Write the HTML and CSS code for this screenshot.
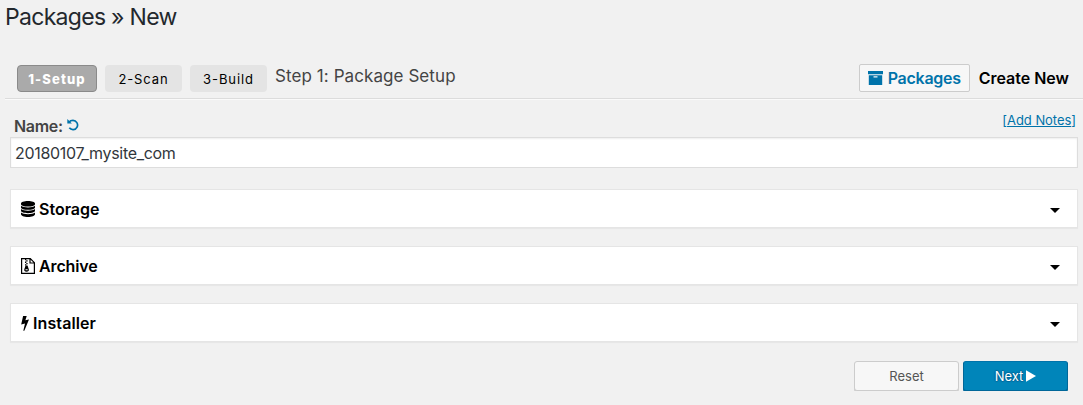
FILE: index.html
```html
<!DOCTYPE html>
<html lang="en">
<head>
  <meta charset="utf-8">
  <title>Packages » New</title>
  <link rel="stylesheet" href="styles.css">
</head>
<body>
  <h1><span>Packages » New</span></h1>

  <div class="toolbar">
    <div class="wizard">
      <div class="step active"><span>1-Setup</span></div>
      <div class="step"><span>2-Scan</span></div>
      <div class="step"><span>3-Build</span></div>
      <div class="wizard-title">Step 1: Package Setup</div>
    </div>
    <div class="toolbar-right">
      <a class="btn-packages">
        <svg width="15" height="14" viewBox="0 0 15 14"><path fill="currentColor" d="M0 0h15v3.2H0zM.8 4.2h13.4V14H.8zM5.5 5.2v1.3h4V5.2z" fill-rule="evenodd"/></svg>
        <span>Packages</span>
      </a>
      <span class="create-new">Create New</span>
    </div>
  </div>

  <form class="package-form">
    <div class="name-row">
      <label for="package-name">Name:</label>
      <svg class="undo" width="12" height="12" viewBox="0 0 12 12"><path d="M1.9 3.2C2.9 2 4.3 1.4 6 1.4a4.6 4.6 0 1 1-3.7 7.4" fill="none" stroke="currentColor" stroke-width="1.7"/><path d="M.3 0v4.6h4.6z" fill="currentColor"/></svg>
      <a class="add-notes">[<u>Add Notes</u>]</a>
    </div>
    <input type="text" id="package-name" value="20180107_mysite_com">

    <div class="box">
      <svg width="14" height="16" viewBox="0 0 14 16"><path d="M0 2.4C0 1 3 0 7 0s7 1 7 2.4v.8C14 4.600 11 5.500 7 5.500S0 4.600 0 3.200zM0 4.700c1.400 1.200 4 1.700 7 1.700s5.600-.5 7-1.700v1.700c0 1.300-3 2.400-7 2.400S0 7.700 0 6.400zM0 8.100c1.400 1.200 4 1.700 7 1.700s5.600-.5 7-1.700v1.700c0 1.300-3 2.400-7 2.400S0 11.100 0 9.800zM0 11.500c1.400 1.200 4 1.700 7 1.700s5.600-.5 7-1.700v1.800C14 14.800 11 16 7 16s-7-1.200-7-2.700z"/></svg>
      <span class="box-title storage">Storage</span>
      <i class="caret"></i>
    </div>
    <div class="box">
      <svg width="14" height="16" viewBox="0 0 14 16"><path d="M.6.6h8.700l4.100 4.100v10.700H.6zM9 .6V5h4.400" fill="none" stroke="#000" stroke-width="1.200"/><path d="M4 1h1.300v1.300H4zM5.300 2.300h1.300v1.300H5.300zM4 3.600h1.300v1.300H4zM5.300 4.900h1.300v1.300H5.300zM4 6.200h1.300v1.300H4z"/><path d="M4.600 7.500h1.900l1.300 3.700c.5 1.500-.6 2.500-2.300 2.500s-2.600-1-2.200-2.500zM4.500 11.300v1h2.200v-1z" fill-rule="evenodd"/></svg>
      <span class="box-title archive">Archive</span>
      <i class="caret"></i>
    </div>
    <div class="box">
      <svg width="8" height="15" viewBox="0 0 8 15"><path d="M2.100 0h3.600L4.400 4.300 8 3.500 3.300 14.800h-1L4 7.500.2 8.400z"/></svg>
      <span class="box-title installer">Installer</span>
      <i class="caret"></i>
    </div>

    <div class="actions">
      <button type="reset" class="button"><span>Reset</span></button>
      <button type="button" class="button primary"><span>Next</span><svg width="10" height="12" viewBox="0 0 10 12"><path d="M0 .2 10 6 0 11.800z" fill="#fff"/></svg></button>
    </div>
  </form>
</body>
</html>
```
FILE: styles.css
```css
* {
  box-sizing: border-box;
}
body {
  margin: 0;
  background: #f1f1f1;
  color: #444;
  font-family: Inter, "Liberation Sans", sans-serif;
  font-size: 13px;
}
h1 {
  margin: 0;
  padding: 3px 0 0 5px;
  height: 54px;
  font-size: 23px;
  font-weight: 400;
  line-height: 29px;
  letter-spacing: -0.7px;
  color: #23282d;
}

/* Wizard steps and page links */
.toolbar {
  display: flex;
  justify-content: space-between;
  height: 46px;
  margin-left: 5px;
  padding: 10px 14px 0 12px;
  border-bottom: 1px solid #fafafa;
  box-shadow: inset 0 -1px 0 #dcdcdc;
}
.wizard {
  display: flex;
  gap: 8px;
}
.step {
  display: flex;
  align-items: center;
  justify-content: center;
  width: 77px;
  height: 27px;
  margin-top: 1px;
  border-radius: 4px;
  background: #e4e4e4;
  color: #000;
  font-size: 13px;
  letter-spacing: 0.9px;
}
.step.active {
  width: 80px;
  border: 1px solid #8a8a8a;
  background: #aaa;
  color: #fff;
  font-weight: 800;
  letter-spacing: 1.1px;
}
.wizard-title {
  font-size: 17px;
  line-height: 24px;
  letter-spacing: 0.08px;
}
.toolbar-right {
  display: flex;
  gap: 9px;
  font-size: 16px;
  font-weight: 600;
  line-height: 28px;
}
.btn-packages {
  display: flex;
  align-items: center;
  gap: 5px;
  width: 111px;
  height: 28px;
  padding-left: 8px;
  border: 1px solid #ccc;
  border-radius: 2px;
  background: #f7f7f7;
  color: #0073aa;
  letter-spacing: -0.25px;
}
.create-new {
  color: #000;
}

/* Package form */
.package-form {
  padding: 0 5px 0 10px;
}
.name-row {
  display: flex;
  height: 37px;
  padding: 0 2px 0 4px;
}
.name-row label {
  margin-top: 16px;
  font-size: 16px;
  font-weight: 600;
  line-height: 20px;
  letter-spacing: -0.3px;
}
.undo {
  margin: 19px 0 0 4px;
  color: #0073aa;
}
.add-notes {
  margin: 12px 0 0 auto;
  line-height: 17px;
  letter-spacing: -0.05px;
  color: #0073aa;
}
input {
  display: block;
  width: 100%;
  height: 31px;
  padding: 0 4px;
  border: 1px solid #ddd;
  background: #fff;
  box-shadow: inset 0 1px 2px rgba(0, 0, 0, 0.07);
  color: #32373c;
  font-family: inherit;
  font-size: 16px;
  letter-spacing: -0.32px;
}
.box {
  display: flex;
  align-items: center;
  height: 39px;
  margin-top: 18px;
  padding: 1px 17px 0 10px;
  border: 1px solid #e5e5e5;
  background: #fff;
  box-shadow: 0 1px 1px rgba(0, 0, 0, 0.04);
}
input + .box {
  margin-top: 21px;
}
.box-title {
  margin-left: 4px;
  font-size: 16px;
  font-weight: 600;
  color: #000;
}
.archive {
  letter-spacing: -0.12px;
}
.installer {
  letter-spacing: 0.1px;
}
.caret {
  margin: 3px 0 0 auto;
  border: 5px solid transparent;
  border-top-color: #000;
  border-bottom: 0;
}
.actions {
  display: flex;
  justify-content: flex-end;
  gap: 4px;
  margin-top: 19px;
  padding-right: 10px;
}
.button {
  display: flex;
  align-items: center;
  justify-content: center;
  gap: 3px;
  width: 105px;
  height: 30px;
  padding: 0;
  border: 1px solid #ccc;
  border-radius: 3px;
  background: #f7f7f7;
  box-shadow: 0 1px 0 #ccc;
  color: #555;
  font-family: inherit;
  font-size: 13px;
}
.button.primary {
  border-color: #0073aa #006799 #006799;
  background: #0085ba;
  box-shadow: 0 1px 0 #006799;
  color: #fff;
  text-shadow: 0 -1px 1px #006799, 1px 0 1px #006799, 0 1px 1px #006799, -1px 0 1px #006799;
}
```
